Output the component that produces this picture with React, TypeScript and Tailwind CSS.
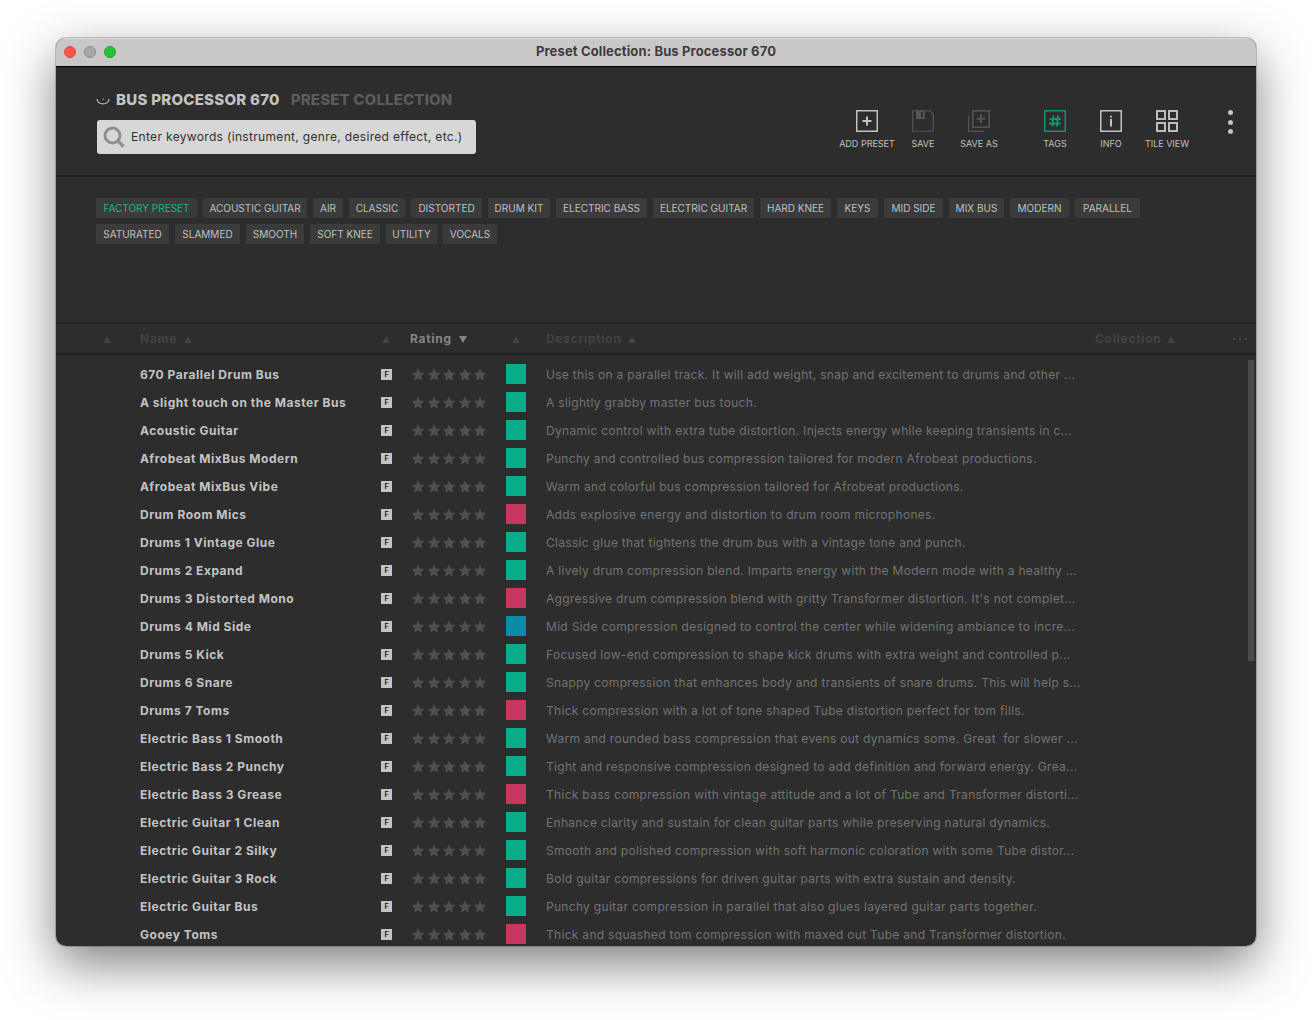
import React from 'react';

type Preset = { name: string; color: string; description: string };

const GREEN = 'bg-[#08ae8a]';
const RED = 'bg-[#c4385f]';
const BLUE = 'bg-[#078ba8]';

const PRESETS: Preset[] = [
    { name: '670 Parallel Drum Bus', color: GREEN, description: 'Use this on a parallel track. It will add weight, snap and excitement to drums and other ...' },
    { name: 'A slight touch on the Master Bus', color: GREEN, description: 'A slightly grabby master bus touch.' },
    { name: 'Acoustic Guitar', color: GREEN, description: 'Dynamic control with extra tube distortion. Injects energy while keeping transients in c...' },
    { name: 'Afrobeat MixBus Modern', color: GREEN, description: 'Punchy and controlled bus compression tailored for modern Afrobeat productions.' },
    { name: 'Afrobeat MixBus Vibe', color: GREEN, description: 'Warm and colorful bus compression tailored for Afrobeat productions.' },
    { name: 'Drum Room Mics', color: RED, description: 'Adds explosive energy and distortion to drum room microphones.' },
    { name: 'Drums 1 Vintage Glue', color: GREEN, description: 'Classic glue that tightens the drum bus with a vintage tone and punch.' },
    { name: 'Drums 2 Expand', color: GREEN, description: 'A lively drum compression blend. Imparts energy with the Modern mode with a healthy ...' },
    { name: 'Drums 3 Distorted Mono', color: RED, description: "Aggressive drum compression blend with gritty Transformer distortion. It's not complet..." },
    { name: 'Drums 4 Mid Side', color: BLUE, description: 'Mid Side compression designed to control the center while widening ambiance to incre...' },
    { name: 'Drums 5 Kick', color: GREEN, description: 'Focused low-end compression to shape kick drums with extra weight and controlled p...' },
    { name: 'Drums 6 Snare', color: GREEN, description: 'Snappy compression that enhances body and transients of snare drums. This will help s...' },
    { name: 'Drums 7 Toms', color: RED, description: 'Thick compression with a lot of tone shaped Tube distortion perfect for tom fills.' },
    { name: 'Electric Bass 1 Smooth', color: GREEN, description: 'Warm and rounded bass compression that evens out dynamics some. Great  for slower ...' },
    { name: 'Electric Bass 2 Punchy', color: GREEN, description: 'Tight and responsive compression designed to add definition and forward energy. Grea...' },
    { name: 'Electric Bass 3 Grease', color: RED, description: 'Thick bass compression with vintage attitude and a lot of Tube and Transformer distorti...' },
    { name: 'Electric Guitar 1 Clean', color: GREEN, description: 'Enhance clarity and sustain for clean guitar parts while preserving natural dynamics.' },
    { name: 'Electric Guitar 2 Silky', color: GREEN, description: 'Smooth and polished compression with soft harmonic coloration with some Tube distor...' },
    { name: 'Electric Guitar 3 Rock', color: GREEN, description: 'Bold guitar compressions for driven guitar parts with extra sustain and density.' },
    { name: 'Electric Guitar Bus', color: GREEN, description: 'Punchy guitar compression in parallel that also glues layered guitar parts together.' },
    { name: 'Gooey Toms', color: RED, description: 'Thick and squashed tom compression with maxed out Tube and Transformer distortion.' },
];

const TAG_ROWS = [
    [
        { label: 'FACTORY PRESET', width: 'w-[101px]', active: true },
        { label: 'ACOUSTIC GUITAR', width: 'w-[104px]' },
        { label: 'AIR', width: 'w-[30px]' },
        { label: 'CLASSIC', width: 'w-[56px]' },
        { label: 'DISTORTED', width: 'w-[71px]' },
        { label: 'DRUM KIT', width: 'w-[62px]' },
        { label: 'ELECTRIC BASS', width: 'w-[91px]' },
        { label: 'ELECTRIC GUITAR', width: 'w-[101px]' },
        { label: 'HARD KNEE', width: 'w-[71px]' },
        { label: 'KEYS', width: 'w-[41px]' },
        { label: 'MID SIDE', width: 'w-[59px]' },
        { label: 'MIX BUS', width: 'w-[55px]' },
        { label: 'MODERN', width: 'w-[59px]' },
        { label: 'PARALLEL', width: 'w-[65px]' },
    ],
    [
        { label: 'SATURATED', width: 'w-[73px]' },
        { label: 'SLAMMED', width: 'w-[65px]' },
        { label: 'SMOOTH', width: 'w-[58px]' },
        { label: 'SOFT KNEE', width: 'w-[70px]' },
        { label: 'UTILITY', width: 'w-[51px]' },
        { label: 'VOCALS', width: 'w-[54px]' },
    ],
];

const Triangle = ({ down = false, className = '' }: { down?: boolean; className?: string }) => (
    <svg className={`h-[7px] w-2 shrink-0 ${className}`} viewBox="0 0 8 7" fill="currentColor">
        <path d={down ? 'M0 0h8L4 7z' : 'M4 0l4 7H0z'} />
    </svg>
);

const Star = () => (
    <svg className="h-[14px] w-[15.5px]" viewBox="0 0 15.5 14" fill="#4f4f4f">
        <path d="M8 .3l1.900 4.200 4.600.5-3.400 3.100.95 4.500-4.050-2.300-4.050 2.300.95-4.500-3.400-3.100 4.600-.5z" />
    </svg>
);

const ToolButton = ({ label, className, children }: { label: string; className: string; children: React.ReactNode }) => (
    <div className="flex w-14 flex-col items-center">
        <svg className={`h-[22px] w-[22px] ${className}`} viewBox="0 0 22 22" fill="none" stroke="currentColor">
            {children}
        </svg>
        <span className="mt-[6px] text-[9px] leading-3 whitespace-nowrap text-[#c0c0c0]">{label}</span>
    </div>
);

const TitleBar = () => (
    <div className="relative flex h-[29px] shrink-0 items-center justify-center border-t border-b border-t-[#dcdbdc] border-b-black bg-[#c9c7c8] pb-px">
        <div className="absolute top-[7px] left-2 flex gap-2">
            <span className="size-3 rounded-full border border-[#e2463f] bg-[#ff544d]" />
            <span className="size-3 rounded-full border border-[#8d8b8c] bg-[#a9a7a8]" />
            <span className="size-3 rounded-full border border-[#1dab2d] bg-[#28c138]" />
        </div>
        <span className="text-[13px] font-bold tracking-[0.14px] text-[#3d3c3d]">Preset Collection: Bus Processor 670</span>
    </div>
);

const Header = () => (
    <div className="flex h-[110px] shrink-0 justify-between border-b-2 border-[#212121] pl-10">
        <div className="pt-[23px]">
            <div className="flex h-5 items-center text-[15px] font-extrabold">
                <svg className="mt-[3px] mr-[6px] h-[8px] w-[14px]" viewBox="0 0 14 8" fill="none" stroke="#c3c3c3">
                    <path d="M1 1c1 6.600 11 6.600 12 0" strokeWidth="1.200" />
                    <circle cx="7" cy="1.300" r=".7" fill="#c3c3c3" stroke="none" />
                </svg>
                <span className="tracking-[0.27px] text-[#c3c3c3]">BUS PROCESSOR 670</span>
                <span className="ml-[11px] tracking-[0.17px] text-[#5c5c5c]">PRESET COLLECTION</span>
            </div>
            <div className="mt-[10px] ml-[1px] flex h-[34px] w-[379px] items-center rounded-[3px] bg-[#d7d7d7] pl-[6px]">
                <svg className="h-[22px] w-[22px]" viewBox="0 0 22 22" fill="none" stroke="#8f8f8f">
                    <circle cx="9.500" cy="9.500" r="7.500" strokeWidth="3" />
                    <path d="M15 15l5.500 5.500" strokeWidth="3.400" />
                </svg>
                <span className="ml-[6px] text-[12px] tracking-[0.33px] whitespace-nowrap text-[#303030]">Enter keywords (instrument, genre, desired effect, etc.)</span>
            </div>
        </div>
        <div className="flex pt-[43px]">
            <ToolButton label="ADD PRESET" className="text-[#c3c3c3]">
                <path d="M.75.75h20.500v20.500H.75z" strokeWidth="1.500" />
                <path d="M11 6.500v9M6.500 11h9" strokeWidth="2" />
            </ToolButton>
            <ToolButton label="SAVE" className="text-[#555]">
                <path d="M.75.75h17.500l3 3.500v17H.75z" strokeWidth="1.200" />
                <path d="M4 1h9v8H4z" fill="currentColor" stroke="none" />
                <path d="M10 2v5" stroke="#2d2d2d" strokeWidth="1.800" />
            </ToolButton>
            <ToolButton label="SAVE AS" className="text-[#555]">
                <path d="M4.750.75h16.500v16.500H4.750z" strokeWidth="1.500" />
                <path d="M13 4.500v8.500M8.700 8.800h8.600" strokeWidth="2" />
                <path d="M.6 6v15.400H16" strokeWidth="1.200" />
            </ToolButton>
            <div className="w-5" />
            <ToolButton label="TAGS" className="text-[#12936f]">
                <path d="M.75.75h20.500v20.500H.75z" strokeWidth="1.500" />
                <path d="M9.500 5.500l-1 11M14 5.500l-1 11M5.500 9h11.500M5 13.500h11.500" strokeWidth="1.900" />
            </ToolButton>
            <ToolButton label="INFO" className="text-[#c3c3c3]">
                <path d="M.75.75h20.500v20.500H.75z" strokeWidth="1.500" />
                <path d="M11 9v7.500M11 5.700v1.800" strokeWidth="2" />
            </ToolButton>
            <ToolButton label="TILE VIEW" className="text-[#bcbcbc]">
                <path d="M1 1h8v8H1zM13 1h8v8h-8zM1 13h8v8H1zM13 13h8v8h-8z" strokeWidth="2" />
            </ToolButton>
            <div className="mr-[23px] ml-[33px] flex flex-col gap-[4.500px]">
                <span className="size-[5px] rounded-full bg-[#c3c3c3]" />
                <span className="size-[5px] rounded-full bg-[#c3c3c3]" />
                <span className="size-[5px] rounded-full bg-[#c3c3c3]" />
            </div>
        </div>
    </div>
);

const Tags = () => (
    <div className="flex h-[147px] shrink-0 flex-col gap-[6px] border-b-2 border-[#212121] pt-[21px] pl-10">
        {TAG_ROWS.map((row, i) => (
            <div key={i} className="flex gap-[6px]">
                {row.map((tag) => (
                    <span
                        key={tag.label}
                        className={`flex h-5 items-center justify-center bg-[#3b3b3b] pt-px text-[10px] whitespace-nowrap ${tag.width} ${tag.active ? 'text-[#14b88b]' : 'text-[#c0c0c0]'}`}
                    >
                        {tag.label}
                    </span>
                ))}
            </div>
        ))}
    </div>
);

const COLUMNS = 'grid grid-cols-[84px_241px_29px_96px_40px_549px_1fr] items-center';

const TableHead = () => (
    <div className={`${COLUMNS} h-[31px] shrink-0 border-b-2 border-[#212121] text-[12px] font-bold tracking-[0.7px] text-[#434343]`}>
        <Triangle className="mt-px ml-[47px]" />
        <span className="flex items-center gap-[7px]">Name <Triangle className="mt-px" /></span>
        <Triangle className="mt-px ml-[1px]" />
        <span className="flex items-center gap-[7px] text-[#858585]">Rating <Triangle down className="mt-px" /></span>
        <Triangle className="mt-px ml-[6px]" />
        <span className="flex items-center gap-[6px]">Description <Triangle className="mt-px" /></span>
        <span className="flex items-center gap-[6px]">
            Collection <Triangle className="mt-px" />
            <span className="mr-[9px] ml-auto flex gap-[4px]">
                <span className="size-[2px] bg-[#4c4c4c]" />
                <span className="size-[2px] bg-[#4c4c4c]" />
                <span className="size-[2px] bg-[#4c4c4c]" />
            </span>
        </span>
    </div>
);

const PresetRow = ({ preset }: { preset: Preset }) => (
    <div className={`${COLUMNS} h-7`}>
        <span />
        <span className="pt-px text-[12px] font-bold tracking-[0.52px] whitespace-nowrap text-[#c3c3c3]">{preset.name}</span>
        <span className="flex h-[11px] w-[11px] items-center justify-center bg-[#c3c3c3] text-[7px] leading-none font-bold text-[#2d2d2d]">F</span>
        <span className="flex pt-px">
            {[1, 2, 3, 4, 5].map((n) => <Star key={n} />)}
        </span>
        <span className={`size-5 ${preset.color}`} />
        <span className="pt-px text-[12px] tracking-[0.3px] whitespace-pre text-[#737373]">{preset.description}</span>
    </div>
);

export default function App() {
    return (
        <div className="h-[1020px] w-[1312px] overflow-hidden bg-white px-14 pt-[38px]">
            <div className="h-[908px] rounded-[10px] shadow-[0_0_0_1px_rgba(0,0,0,0.2),0_18px_50px_rgba(0,0,0,0.5)]">
                <div className="flex h-full flex-col overflow-hidden rounded-[10px] bg-[#2d2d2d] font-['Inter',sans-serif]">
                    <TitleBar />
                    <Header />
                    <Tags />
                    <TableHead />
                    <div className="relative min-h-0 flex-1 overflow-hidden pt-[5px]">
                        {PRESETS.map((preset) => <PresetRow key={preset.name} preset={preset} />)}
                        <div className="absolute top-[5px] right-[2px] h-[301px] w-[6px] bg-[#4a4a4a]" />
                    </div>
                </div>
            </div>
        </div>
    );
}
